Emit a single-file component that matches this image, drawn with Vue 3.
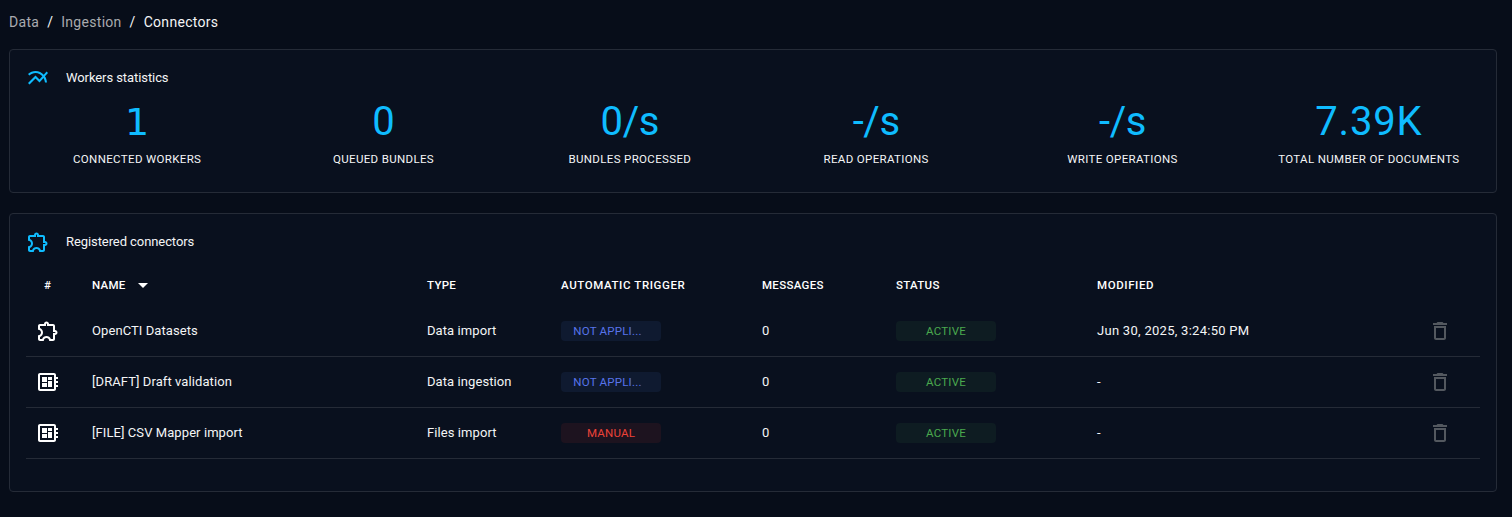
<script setup>
const icons = {
  chart: 'M22 6.92l-1.41-1.41-2.85 3.21C15.68 6.4 12.83 5 9.61 5 6.72 5 4.07 6.16 2 8l1.42 1.42C5.12 7.93 7.27 7 9.61 7c2.74 0 5.09 1.26 6.77 3.24l-2.88 3.24-4-4L2 16.99l1.5 1.5 6-6.01 4 4 4.05-4.55c.75 1.35 1.25 2.9 1.44 4.55H21c-.22-2.3-.95-4.39-2.04-6.14L22 6.92z',
  puzzle: 'M10.5 4.5c.28 0 .5.22.5.5v2h6v6h2c.28 0 .5.22.5.5s-.22.5-.5.5h-2v6h-2.12c-.68-1.75-2.39-3-4.38-3s-3.7 1.25-4.38 3H4v-2.12c1.75-.68 3-2.39 3-4.38 0-1.99-1.24-3.7-2.99-4.38L4 7h6V5c0-.28.22-.5.5-.5m0-2C9.12 2.5 8 3.62 8 5H4c-1.1 0-1.99.9-1.99 2v3.8h.29c1.49 0 2.7 1.21 2.7 2.7s-1.21 2.7-2.7 2.7H2V20c0 1.1.9 2 2 2h3.8v-.3c0-1.49 1.21-2.7 2.7-2.7s2.7 1.21 2.7 2.7v.3H17c1.1 0 2-.9 2-2v-4c1.38 0 2.5-1.12 2.5-2.5S20.38 11 19 11V7c0-1.1-.9-2-2-2h-4c0-1.38-1.12-2.5-2.5-2.5z',
  board: 'M22 9V7h-2V5c0-1.1-.9-2-2-2H4c-1.1 0-2 .9-2 2v14c0 1.1.9 2 2 2h14c1.1 0 2-.9 2-2v-2h2v-2h-2v-2h2v-2h-2V9h2zm-4 10H4V5h14v14zM6 13h5v4H6v-4zm6-6h4v3h-4V7zM6 7h5v5H6V7zm6 4h4v6h-4v-6z',
  trash: 'M6 19c0 1.1.9 2 2 2h8c1.1 0 2-.9 2-2V7H6v12zM8 9h8v10H8V9zm7.5-5l-1-1h-5l-1 1H5v2h14V4h-3.5z',
  arrow: 'M7 10l5 5 5-5z'
}

const stats = [
  { value: '1', label: 'Connected workers', kind: 'slab' },
  { value: '0', label: 'Queued bundles' },
  { value: '0/s', label: 'Bundles processed', kind: 'rate' },
  { value: '-/s', label: 'Read operations', kind: 'rate' },
  { value: '-/s', label: 'Write operations', kind: 'rate' },
  { value: '7.39K', label: 'Total number of documents', kind: 'total' }
]

const headers = [
  { text: 'Type' },
  { text: 'Automatic trigger', wide: true },
  { text: 'Messages' },
  { text: 'Status' },
  { text: 'Modified', wide: true }
]

const connectors = [
  { icon: 'puzzle', name: 'OpenCTI Datasets', type: 'Data import', trigger: 'Not appli...', tone: 'blue', modified: 'Jun 30, 2025, 3:24:50 PM' },
  { icon: 'board', name: '[DRAFT] Draft validation', type: 'Data ingestion', trigger: 'Not appli...', tone: 'blue', modified: '-' },
  { icon: 'board', name: '[FILE] CSV Mapper import', type: 'Files import', trigger: 'Manual', tone: 'red', modified: '-' }
]
</script>

<template>
  <main class="page">
    <nav class="crumbs">
      <span class="muted">Data</span><span class="sep">/</span>
      <span class="muted">Ingestion</span><span class="sep">/</span>
      <span class="current">Connectors</span>
    </nav>

    <section class="panel workers">
      <header class="panel-head">
        <svg class="icon accent" viewBox="0 0 24 24"><path :d="icons.chart" /></svg>
        <h2>Workers statistics</h2>
      </header>
      <div class="stats">
        <div v-for="s in stats" :key="s.label" class="stat">
          <div class="value" :class="s.kind">{{ s.value }}</div>
          <div class="label">{{ s.label }}</div>
        </div>
      </div>
    </section>

    <section class="panel registered">
      <header class="panel-head">
        <svg class="icon accent" viewBox="0 0 24 24"><path :d="icons.puzzle" /></svg>
        <h2>Registered connectors</h2>
      </header>
      <div class="grid head">
        <span class="hash">#</span>
        <span class="sortable">Name<svg class="icon" viewBox="0 0 24 24"><path :d="icons.arrow" /></svg></span>
        <span v-for="h in headers" :key="h.text" :class="{ wide: h.wide }">{{ h.text }}</span>
      </div>
      <div v-for="c in connectors" :key="c.name" class="grid row">
        <svg class="icon lead" viewBox="0 0 24 24"><path :d="icons[c.icon]" /></svg>
        <span class="cell">{{ c.name }}</span>
        <span class="cell">{{ c.type }}</span>
        <span class="chip" :class="c.tone">{{ c.trigger }}</span>
        <span class="cell">0</span>
        <span class="chip green">Active</span>
        <span class="cell modified">{{ c.modified }}</span>
        <svg class="icon trash" viewBox="0 0 24 24"><path :d="icons.trash" /></svg>
      </div>
    </section>
  </main>
</template>

<style>
body {
  background: #070d19;
}
</style>

<style scoped>
.page {
  box-sizing: border-box;
  height: 517px;
  padding: 12px 15px 0 9px;
  color: #f4f5f6;
  font-family: Roboto, "Liberation Sans", sans-serif;
  font-size: 13px;
}
.crumbs {
  display: flex;
  height: 20px;
  margin-bottom: 17px;
  font-size: 14px;
  line-height: 20px;
  letter-spacing: 0.3px;
}
.muted {
  color: rgba(255, 255, 255, 0.66);
}
.sep {
  width: 22px;
  text-align: center;
}
.panel {
  box-sizing: border-box;
  padding: 16px;
  border: 1px solid #252b37;
  border-radius: 4px;
  background: #09101e;
}
.workers {
  height: 144px;
  margin-bottom: 20px;
}
.registered {
  height: 279px;
}
.panel-head {
  display: flex;
  align-items: center;
  gap: 16px;
  height: 24px;
}
h2 {
  margin: 0;
  font-size: 13px;
  font-weight: 400;
  line-height: 20px;
  letter-spacing: -0.08px;
}
.icon {
  display: block;
  flex: none;
  width: 24px;
  height: 24px;
  fill: currentColor;
}
.accent {
  color: #0fbcff;
}
.stats {
  display: grid;
  grid-template-columns: repeat(6, 1fr);
  gap: 24px;
  text-align: center;
}
.value {
  height: 61px;
  color: #0fbcff;
  font-size: 40px;
  line-height: 64px;
}
.slab {
  font-family: "DejaVu Sans", sans-serif;
  font-size: 38px;
}
.rate {
  letter-spacing: -0.4px;
}
.total {
  letter-spacing: 0.8px;
}
.label {
  font-size: 11.5px;
  line-height: 16px;
  letter-spacing: 0.35px;
  text-transform: uppercase;
}
.grid {
  display: grid;
  grid-template-columns: 66px 335px 134px 201px 134px 201px 1fr 66px;
  align-items: center;
}
.head {
  box-sizing: border-box;
  height: 52px;
  padding-top: 9px;
  color: #fff;
  font-size: 11.5px;
  font-weight: 500;
  text-transform: uppercase;
  letter-spacing: 0.3px;
}
.wide {
  letter-spacing: 0.6px;
}
.hash {
  padding-left: 18px;
}
.sortable {
  display: flex;
  align-items: center;
}
.sortable .icon {
  margin-left: 5px;
}
.row {
  height: 50px;
  border-bottom: 1px solid #252b37;
}
.cell {
  padding-bottom: 2px;
  letter-spacing: 0.08px;
}
.modified {
  letter-spacing: 0.28px;
}
.lead {
  margin-left: 10px;
  color: #fff;
}
.trash {
  margin-left: 14px;
  color: #53585f;
}
.chip {
  box-sizing: border-box;
  width: 100px;
  height: 20px;
  border-radius: 4px;
  font-size: 11.5px;
  line-height: 20px;
  letter-spacing: 0.2px;
  text-align: center;
  text-transform: uppercase;
}
.blue {
  padding-right: 7px;
  color: #5774ea;
  background: #0f1a30;
}
.red {
  color: #ec4238;
  background: #1d131f;
}
.green {
  color: #4aa94e;
  background: #0e1c22;
}
</style>
